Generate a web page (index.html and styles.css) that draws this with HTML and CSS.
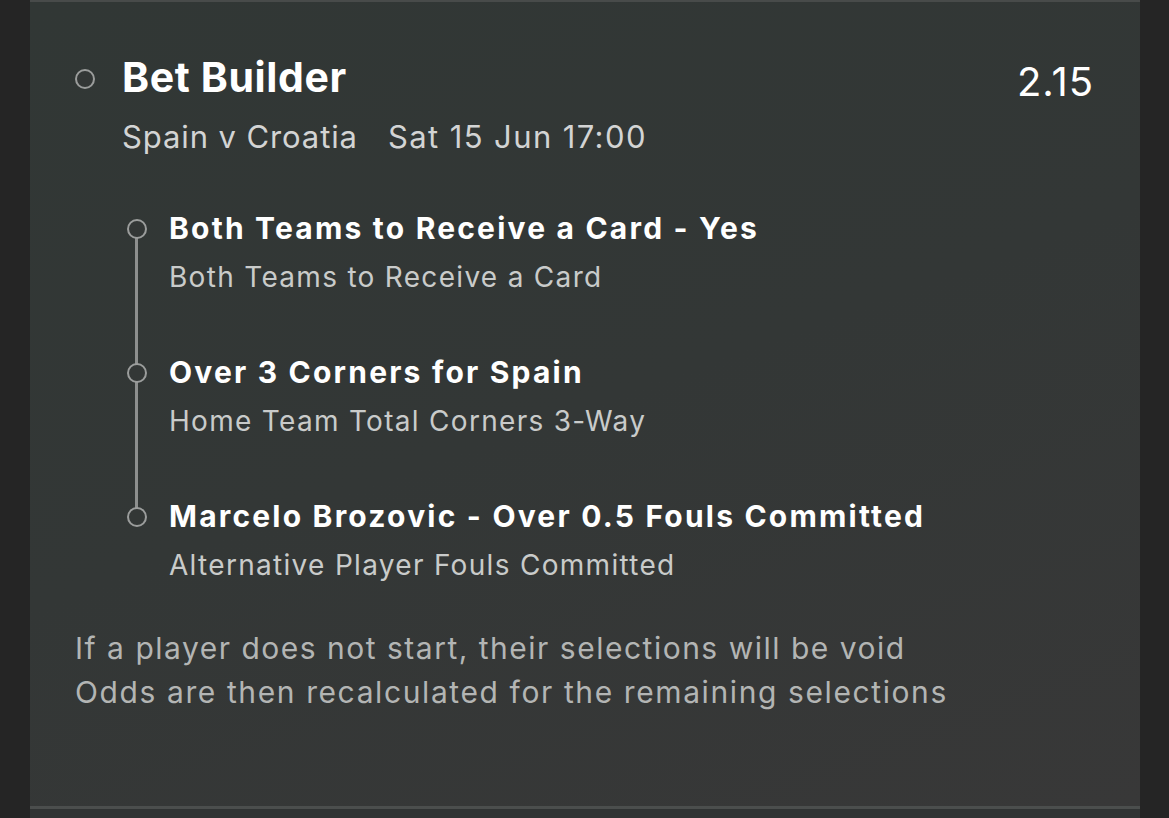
FILE: index.html
```html
<!DOCTYPE html>
<html>
<head>
<meta charset="utf-8">
<link rel="stylesheet" href="styles.css">
</head>
<body>
<div class="page">
  <div class="card">
    <div class="head">
      <span class="dot dot-main"></span>
      <div class="head-text">
        <div class="head-row">
          <h1 class="title">Bet Builder</h1>
          <div class="odds">2.15</div>
        </div>
        <div class="event"><span class="teams">Spain v Croatia</span><span class="date">Sat 15 Jun 17:00</span></div>
      </div>
    </div>
    <div class="legs">
      <div class="leg">
        <span class="dot"></span>
        <div class="leg-text">
          <div class="leg-title">Both Teams to Receive a Card - Yes</div>
          <div class="leg-sub">Both Teams to Receive a Card</div>
        </div>
      </div>
      <div class="leg">
        <span class="dot"></span>
        <div class="leg-text">
          <div class="leg-title">Over 3 Corners for Spain</div>
          <div class="leg-sub">Home Team Total Corners 3-Way</div>
        </div>
      </div>
      <div class="leg">
        <span class="dot"></span>
        <div class="leg-text">
          <div class="leg-title">Marcelo Brozovic - Over 0.5 Fouls Committed</div>
          <div class="leg-sub">Alternative Player Fouls Committed</div>
        </div>
      </div>
    </div>
    <p class="note"><span class="l1">If a player does not start, their selections will be void</span><br><span class="l2">Odds are then recalculated for the remaining selections</span></p>
  </div>
  <div class="next"></div>
</div>
</body>
</html>
```

FILE: styles.css
```css
* { box-sizing: border-box; }
html, body { margin: 0; padding: 0; }
body {
  background: #252525;
  font-family: Inter, "Noto Sans", sans-serif;
  color: #fff;
  height: 818px;
  overflow: hidden;
}
.page {
  margin: 0 29px 0 30px;
  display: flex;
  flex-direction: column;
}
.card {
  height: 809px;
  border-top: 2px solid #484b4a;
  border-bottom: 3px solid #4b4e4d;
  background: linear-gradient(160deg, #313735 0%, #333736 50%, #383838 100%);
  padding: 51px 46px 0 45px;
}
.next {
  height: 9px;
  background: #303333;
}
.head {
  display: flex;
  align-items: flex-start;
}
.dot {
  width: 20px;
  height: 20px;
  border: 2.5px solid #9b9d9c;
  border-radius: 50%;
  flex: none;
  background: #333736;
  position: relative;
  z-index: 1;
}
.dot-main {
  margin-top: 16px;
  margin-right: 27px;
}
.head-text { flex: 1; }
.head-row {
  display: flex;
  justify-content: space-between;
  align-items: flex-start;
}
.title {
  margin: 0;
  font-size: 41px;
  font-weight: 700;
  line-height: 48px;
  letter-spacing: 0.6px;
}
.odds {
  font-size: 40px;
  font-weight: 400;
  line-height: 48px;
  margin-top: 5px;
  margin-right: 0;
  letter-spacing: 1px;
}
.event {
  margin-top: 13px;
  font-size: 31px;
  line-height: 36px;
  color: #d3d4d4;
  display: flex;
  gap: 30px;
}
.teams { letter-spacing: 0.9px; }
.date { letter-spacing: 1.4px; }
.legs {
  margin-top: 55px;
  padding-left: 52px;
  position: relative;
  display: flex;
  flex-direction: column;
  gap: 60px;
}
.legs::before {
  content: "";
  position: absolute;
  left: 60px;
  top: 19px;
  bottom: 65px;
  width: 3px;
  background: #8d8f8e;
}
.leg {
  display: flex;
  align-items: flex-start;
}
.leg .dot { margin-top: 9px; margin-right: 22px; }
.leg-title {
  font-size: 30px;
  font-weight: 700;
  line-height: 36px;
  letter-spacing: 2.2px;
}
.leg-sub {
  margin-top: 14px;
  font-size: 28px;
  line-height: 34px;
  color: #c9cbca;
  letter-spacing: 1.3px;
}
.note {
  margin: 44px 0 0 0;
  font-size: 30px;
  line-height: 44px;
  color: #b3b5b4;
}
.l1 { letter-spacing: 1.5px; }
.l2 { letter-spacing: 1.6px; }
```
